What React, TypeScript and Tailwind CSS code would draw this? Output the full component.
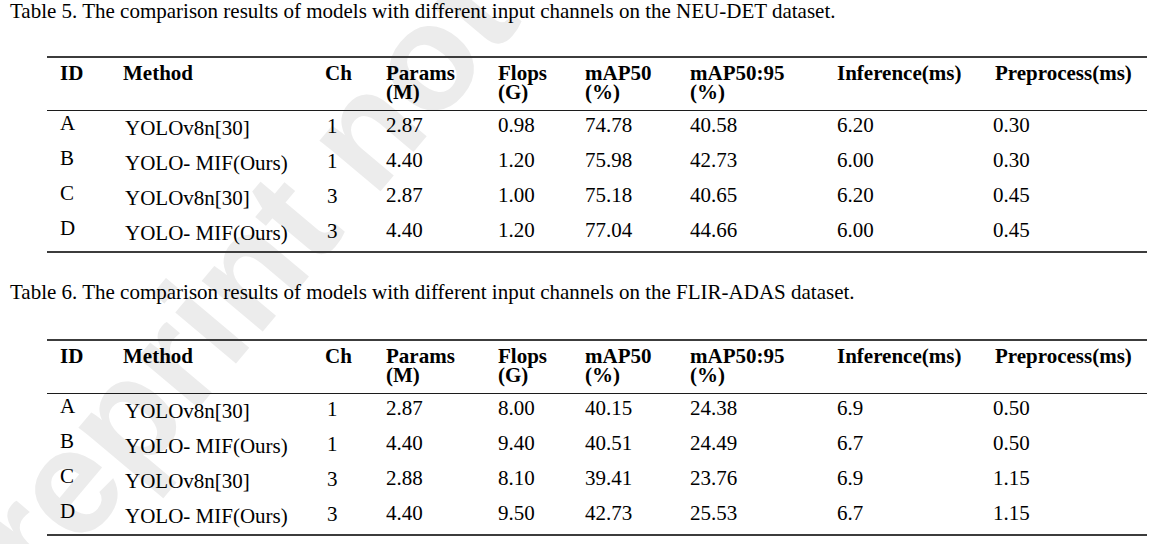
import React from 'react';

type Row = { id: string; method: string; ch: string; params: string; flops: string; map50: string; map5095: string; inf: string; pre: string };

const headers = [
  ['ID', ''],
  ['Method', ''],
  ['Ch', ''],
  ['Params', '(M)'],
  ['Flops', '(G)'],
  ['mAP50', '(%)'],
  ['mAP50:95', '(%)'],
  ['Inference(ms)', ''],
  ['Preprocess(ms)', ''],
];

const neuRows: Row[] = [
  { id: 'A', method: 'YOLOv8n[30]', ch: '1', params: '2.87', flops: '0.98', map50: '74.78', map5095: '40.58', inf: '6.20', pre: '0.30' },
  { id: 'B', method: 'YOLO- MIF(Ours)', ch: '1', params: '4.40', flops: '1.20', map50: '75.98', map5095: '42.73', inf: '6.00', pre: '0.30' },
  { id: 'C', method: 'YOLOv8n[30]', ch: '3', params: '2.87', flops: '1.00', map50: '75.18', map5095: '40.65', inf: '6.20', pre: '0.45' },
  { id: 'D', method: 'YOLO- MIF(Ours)', ch: '3', params: '4.40', flops: '1.20', map50: '77.04', map5095: '44.66', inf: '6.00', pre: '0.45' },
];

const flirRows: Row[] = [
  { id: 'A', method: 'YOLOv8n[30]', ch: '1', params: '2.87', flops: '8.00', map50: '40.15', map5095: '24.38', inf: '6.9', pre: '0.50' },
  { id: 'B', method: 'YOLO- MIF(Ours)', ch: '1', params: '4.40', flops: '9.40', map50: '40.51', map5095: '24.49', inf: '6.7', pre: '0.50' },
  { id: 'C', method: 'YOLOv8n[30]', ch: '3', params: '2.88', flops: '8.10', map50: '39.41', map5095: '23.76', inf: '6.9', pre: '1.15' },
  { id: 'D', method: 'YOLO- MIF(Ours)', ch: '3', params: '4.40', flops: '9.50', map50: '42.73', map5095: '25.53', inf: '6.7', pre: '1.15' },
];

const cols = 'grid grid-cols-[63px_202px_61px_112px_87px_105px_147px_158px_1fr] pl-[13px]';

function ResultTable({ rows }: { rows: Row[] }) {
  return (
    <div className="ml-[47px] w-[1100px] border-t-2 border-b-2 border-t-[#3c3c3c] border-b-[#3c3c3c]">
      {/* header */}
      <div className={`${cols} pt-[6px] pb-[8px] border-b-[1.5px] border-b-[#1c1c1c] font-bold leading-[19px]`}>
        {headers.map(([a, b]) => (
          <div key={a} className="whitespace-nowrap">
            <div>{a}</div>
            <div>{b || '\u00a0'}</div>
          </div>
        ))}
      </div>
      {/* body */}
      {rows.map((r) => (
        <div key={r.id} className={`${cols} h-[35px] items-center whitespace-nowrap`}>
          <div className="pb-[11px]">{r.id}</div>
          <div className="pl-[2px]">{r.method}</div>
          <div className="pl-[2px] pb-[4px]">{r.ch}</div>
          <div className="pb-[6px]">{r.params}</div>
          <div className="pb-[6px]">{r.flops}</div>
          <div className="pb-[6px]">{r.map50}</div>
          <div className="pb-[6px]">{r.map5095}</div>
          <div className="pb-[6px]">{r.inf}</div>
          <div className="pb-[6px] -ml-[2px]">{r.pre}</div>
        </div>
      ))}
    </div>
  );
}

export default function App() {
  return (
    <div className="relative w-[1153px] h-[544px] overflow-hidden bg-white text-black font-['Liberation_Serif','Times_New_Roman',serif] text-[21px] leading-[23px]">
      {/* watermark */}
      <div className="pointer-events-none absolute left-[-120px] top-[590px] origin-top-left -rotate-[50deg] whitespace-nowrap font-['Liberation_Sans',Arial,sans-serif] font-bold text-[150px] leading-none text-[#ececec]">
        Preprint not peer reviewed
      </div>

      <div className="relative">
        <p className="pl-[10px] whitespace-nowrap">Table 5. The comparison results of models with different input channels on the NEU-DET dataset.</p>
        <div className="mt-[33px]">
          <ResultTable rows={neuRows} />
        </div>
        <p className="pl-[10px] mt-[28px] whitespace-nowrap">Table 6. The comparison results of models with different input channels on the FLIR-ADAS dataset.</p>
        <div className="mt-[35px]">
          <ResultTable rows={flirRows} />
        </div>
        <p className="pl-[10px] mt-[7px] whitespace-nowrap">
          It is clear that the models with three input channels have higher detection accuracy, while the inference time is nearly the same.
        </p>
      </div>
    </div>
  );
}
